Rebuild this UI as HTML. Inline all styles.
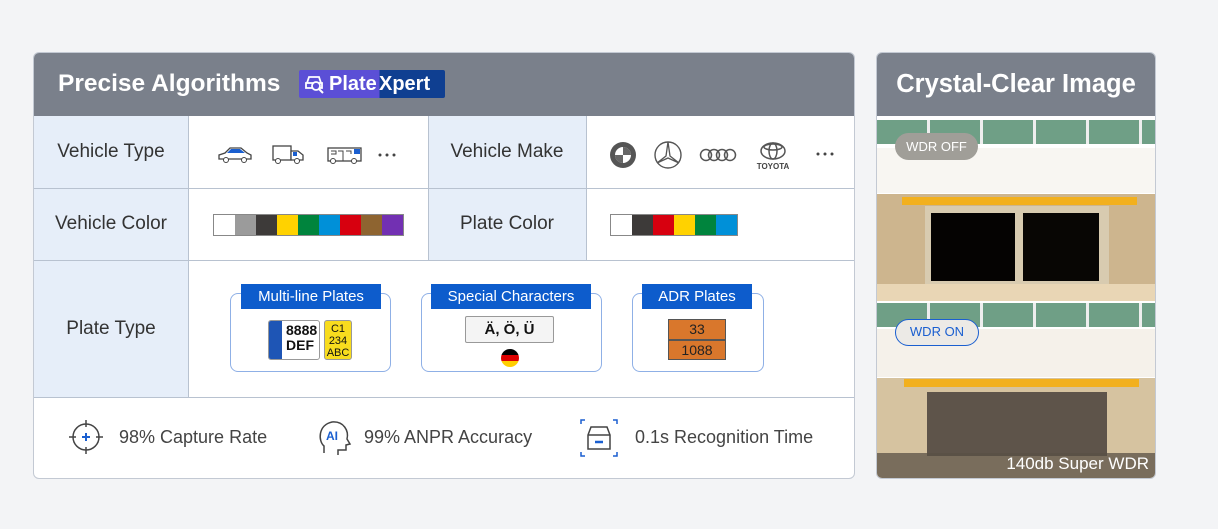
<!DOCTYPE html>
<html><head><meta charset="utf-8"><style>
*{box-sizing:border-box;margin:0;padding:0}
body{width:1218px;height:529px;background:#f3f4f6;font-family:"Liberation Sans",sans-serif;position:relative;overflow:hidden;color:#333}
.abs{position:absolute}
.card{position:absolute;background:#fff;border:1px solid #c3c9d3;border-radius:6px;overflow:hidden}
.hdr{position:absolute;left:0;top:0;right:0;height:63px;background:#7a808b;color:#fff;font-weight:bold;font-size:24.5px}
.lbl{position:absolute;background:#e6eef9;font-size:19px;color:#333;display:flex;align-items:center;justify-content:center}
.hl{position:absolute;height:1px;background:#b8c2d0}
.vl{position:absolute;width:1px;background:#b8c2d0}
.sw{position:absolute;display:flex;border:1px solid #888}
.sw div{width:21px;height:20px}
.box{position:absolute;border:1px solid #8fb0e6;border-radius:8px}
.tag{position:absolute;background:#0d5ccc;color:#fff;font-size:15px;text-align:center;height:25px;line-height:25px}
.st{position:absolute;font-size:18px;color:#444;top:426px}
</style></head><body>
<div class="card" style="left:33px;top:52px;width:822px;height:427px">
 <div class="hdr"><span class="abs" style="left:24px;top:17px">Precise Algorithms</span>
  <div class="abs" style="left:265px;top:17px;width:146px;height:28px;background:linear-gradient(90deg,#5b4fd6 0 55%,#0f3f91 55%);border-radius:2px;font-size:20px;line-height:28px">
   <svg class="abs" style="left:5px;top:4px" width="22" height="20" viewBox="0 0 22 20"><path d="M3 9 L5 3 H15 L17 9 Z M2 9 H18 V14 H2 Z" fill="none" stroke="#fff" stroke-width="1.8"/><circle cx="12" cy="12" r="4" fill="#5b4fd6" stroke="#fff" stroke-width="1.8"/><path d="M15 15 L19 19" stroke="#fff" stroke-width="2"/></svg>
   <span class="abs" style="left:30px;top:0">Plate</span><span class="abs" style="left:80px;top:0">Xpert</span></div>
 </div>
 <div class="lbl" style="left:0;top:63px;width:154px;height:72px">Vehicle Type</div>
 <div class="lbl" style="left:0;top:135px;width:154px;height:72px">Vehicle Color</div>
 <div class="lbl" style="left:0;top:207px;width:154px;height:137px">Plate Type</div>
 <div class="lbl" style="left:394px;top:63px;width:158px;height:72px">Vehicle Make</div>
 <div class="lbl" style="left:394px;top:135px;width:158px;height:72px">Plate Color</div>
 <div class="hl" style="left:0;right:0;top:135px"></div>
 <div class="hl" style="left:0;right:0;top:207px"></div>
 <div class="hl" style="left:0;right:0;top:344px"></div>
 <div class="vl" style="left:154px;top:63px;height:281px"></div>
 <div class="vl" style="left:394px;top:63px;height:144px"></div>
 <div class="vl" style="left:552px;top:63px;height:144px"></div>
 <svg class="abs" style="left:183px;top:90px" width="200" height="24" viewBox="0 0 200 24">
  <path d="M2 16 V12 L8 10 L13 5 H24 L30 10 L34 12 V16 Z" fill="#fff" stroke="#444" stroke-width="1.3"/><path d="M14 6 H23 L28 10 H10 Z" fill="#1a5fd0"/><circle cx="9" cy="17" r="2.5" fill="#fff" stroke="#444"/><circle cx="27" cy="17" r="2.5" fill="#fff" stroke="#444"/>
  <rect x="56" y="3" width="18" height="14" fill="#fff" stroke="#444" stroke-width="1.3"/><path d="M74 8 H81 L86 12 V17 H74 Z" fill="#fff" stroke="#444" stroke-width="1.3"/><rect x="76" y="9" width="4" height="4" fill="#1a5fd0"/><circle cx="61" cy="18" r="2.5" fill="#fff" stroke="#444"/><circle cx="80" cy="18" r="2.5" fill="#fff" stroke="#444"/>
  <rect x="111" y="5" width="33" height="13" fill="#fff" stroke="#444" stroke-width="1.3"/><rect x="137" y="6" width="6" height="5" fill="#1a5fd0"/><path d="M114 8 H119 V11 H114 M121 8 H126 V18 M129 8 H134 V11" fill="none" stroke="#444"/><circle cx="116" cy="18" r="2.5" fill="#fff" stroke="#444"/><circle cx="137" cy="18" r="2.5" fill="#fff" stroke="#444"/>
  <circle cx="163" cy="12" r="1.5" fill="#444"/><circle cx="170" cy="12" r="1.5" fill="#444"/><circle cx="177" cy="12" r="1.5" fill="#444"/></svg>
 <svg class="abs" style="left:574px;top:86px" width="230" height="32" viewBox="0 0 230 32">
  <circle cx="15" cy="16" r="13" fill="#555"/><circle cx="15" cy="16" r="8" fill="#fff"/><path d="M15 8 A8 8 0 0 1 23 16 H15 Z M15 24 A8 8 0 0 1 7 16 H15 Z" fill="#666"/>
  <circle cx="60" cy="16" r="13" fill="none" stroke="#555" stroke-width="1.4"/><path d="M60 3 L62 17 L71 24 L60 19 L49 24 L58 17 Z" fill="none" stroke="#555" stroke-width="1.3"/>
  <g fill="none" stroke="#555" stroke-width="1.5"><circle cx="98" cy="16" r="5.5"/><circle cx="106" cy="16" r="5.5"/><circle cx="114" cy="16" r="5.5"/><circle cx="122" cy="16" r="5.5"/>
  <ellipse cx="165" cy="12" rx="12" ry="8"/><ellipse cx="165" cy="12" rx="4" ry="8"/><ellipse cx="165" cy="8" rx="9" ry="3"/></g>
  <text x="165" y="30" font-size="8" text-anchor="middle" fill="#444" font-family="Liberation Sans" font-weight="bold">TOYOTA</text>
  <circle cx="210" cy="15" r="1.5" fill="#444"/><circle cx="217" cy="15" r="1.5" fill="#444"/><circle cx="224" cy="15" r="1.5" fill="#444"/></svg>
 <div class="sw" style="left:179px;top:161px"><div style="background:#fff"></div><div style="background:#9b9b9b"></div><div style="background:#3d3a39"></div><div style="background:#ffd200"></div><div style="background:#00843d"></div><div style="background:#0090d8"></div><div style="background:#d7000f"></div><div style="background:#8e6430"></div><div style="background:#7230b2"></div></div>
 <div class="sw" style="left:576px;top:161px"><div style="background:#fff"></div><div style="background:#3d3a39"></div><div style="background:#d7000f"></div><div style="background:#ffd200"></div><div style="background:#00843d"></div><div style="background:#0090d8"></div></div>
 <div class="box" style="left:196px;top:240px;width:161px;height:79px"></div>
 <div class="tag" style="left:207px;top:231px;width:140px">Multi-line Plates</div>
 <div class="abs" style="left:234px;top:267px;width:52px;height:40px;border:1px solid #999;border-radius:3px;background:#fff;overflow:hidden"><div class="abs" style="left:0;top:0;width:13px;height:40px;background:#1e55b5"></div><div class="abs" style="left:17px;top:2px;font-size:14px;font-weight:bold;line-height:15px;color:#111">8888<br>DEF</div></div>
 <div class="abs" style="left:290px;top:267px;width:28px;height:40px;border:1px solid #999;border-radius:3px;background:#f8dc1e;font-size:11px;line-height:12px;text-align:center;padding-top:2px;color:#111">C1<br>234<br>ABC</div>
 <div class="box" style="left:387px;top:240px;width:181px;height:79px"></div>
 <div class="tag" style="left:397px;top:231px;width:160px">Special Characters</div>
 <div class="abs" style="left:431px;top:263px;width:89px;height:27px;border:1px solid #999;border-radius:2px;background:#f4f4f4;font-size:15px;font-weight:bold;text-align:center;line-height:25px;color:#111">Ä, Ö, Ü</div>
 <div class="abs" style="left:467px;top:296px;width:18px;height:18px;border-radius:50%;background:linear-gradient(#000 0 33%,#dd0000 33% 66%,#ffce00 66%)"></div>
 <div class="box" style="left:598px;top:240px;width:132px;height:79px"></div>
 <div class="tag" style="left:608px;top:231px;width:110px">ADR Plates</div>
 <div class="abs" style="left:634px;top:266px;width:58px;height:41px;border:1px solid #555;background:#d9772c;font-size:14px;text-align:center;line-height:19px;color:#222"><div style="border-bottom:2px solid #555">33</div><div>1088</div></div>
 <svg class="abs" style="left:34px;top:366px" width="36" height="36" viewBox="0 0 36 36" fill="none" stroke="#444" stroke-width="1.5"><circle cx="18" cy="18" r="13"/><path d="M18 1 V8 M18 28 V35 M1 18 H8 M28 18 H35"/><path d="M18 14 V22 M14 18 H22" stroke="#1a5fd0" stroke-width="2"/></svg>
 <div class="st" style="left:85px;top:374px">98% Capture Rate</div>
 <svg class="abs" style="left:282px;top:366px" width="36" height="38" viewBox="0 0 36 38" fill="none" stroke="#444" stroke-width="1.5"><path d="M8 34 V27 C2 22 2 6 16 3 C28 2 33 12 31 20 L34 25 L30 26 V31 H22 V36"/><text x="10" y="21" font-size="12" font-weight="bold" fill="#1a5fd0" stroke="none" font-family="Liberation Sans">AI</text></svg>
 <div class="st" style="left:330px;top:374px">99% ANPR Accuracy</div>
 <svg class="abs" style="left:546px;top:366px" width="38" height="38" viewBox="0 0 38 38" fill="none" stroke-width="1.5"><path d="M1 5 V1 H5 M33 1 H37 V5 M37 33 V37 H33 M5 37 H1 V33" stroke="#1a5fd0"/><path d="M8 16 L11 8 H27 L30 16 V30 H8 Z M8 16 H30" stroke="#444"/><path d="M15 23 H23" stroke="#1a5fd0" stroke-width="2.5"/></svg>
 <div class="st" style="left:601px;top:374px">0.1s Recognition Time</div>
</div>
<div class="card" style="left:876px;top:52px;width:280px;height:427px">
 <div class="hdr" style="text-align:center;line-height:63px;font-size:25.5px">Crystal-Clear Image</div>
 <div class="abs" style="left:0;top:63px;width:280px;height:364px;background:#fff">
  <div class="abs" style="left:0;top:4px;width:280px;height:24px;background:repeating-linear-gradient(90deg,#6f9f86 0 50px,#eee 50px 53px)"></div>
  <div class="abs" style="left:0;top:32px;width:280px;height:45px;background:#f8f6f2"></div>
  <div class="abs" style="left:0;top:78px;width:280px;height:107px;background:#cdb58e"></div>
  <div class="abs" style="left:25px;top:81px;width:235px;height:8px;background:#f2b01e"></div>
  <div class="abs" style="left:48px;top:90px;width:184px;height:82px;background:#d8cbb0"></div>
  <div class="abs" style="left:54px;top:97px;width:84px;height:68px;background:#050302"></div>
  <div class="abs" style="left:146px;top:97px;width:76px;height:68px;background:#080604"></div>
  <div class="abs" style="left:0;top:168px;width:280px;height:17px;background:#e9d6b5"></div>
  <div class="abs" style="left:18px;top:17px;width:83px;height:27px;border-radius:14px;background:#a09e98;color:#fff;font-size:13px;text-align:center;line-height:27px">WDR OFF</div>
  <div class="abs" style="left:0;top:187px;width:280px;height:24px;background:repeating-linear-gradient(90deg,#6f9f86 0 50px,#eee 50px 53px)"></div>
  <div class="abs" style="left:0;top:213px;width:280px;height:48px;background:#f5f1ea"></div>
  <div class="abs" style="left:0;top:262px;width:280px;height:102px;background:#d6c3a0"></div>
  <div class="abs" style="left:27px;top:263px;width:235px;height:8px;background:#f2b01e"></div>
  <div class="abs" style="left:50px;top:276px;width:180px;height:64px;background:#5e544a"></div>
  <div class="abs" style="left:0;top:337px;width:280px;height:27px;background:rgba(90,80,70,.75)"></div>
  <div class="abs" style="left:18px;top:203px;width:84px;height:27px;border-radius:14px;background:#eceae6;border:1.5px solid #1a5fd0;color:#1a5fd0;font-size:13px;text-align:center;line-height:24px">WDR ON</div>
  <div class="abs" style="right:8px;top:338px;color:#fff;font-size:17px">140db Super WDR</div>
 </div>
</div>
</body></html>
